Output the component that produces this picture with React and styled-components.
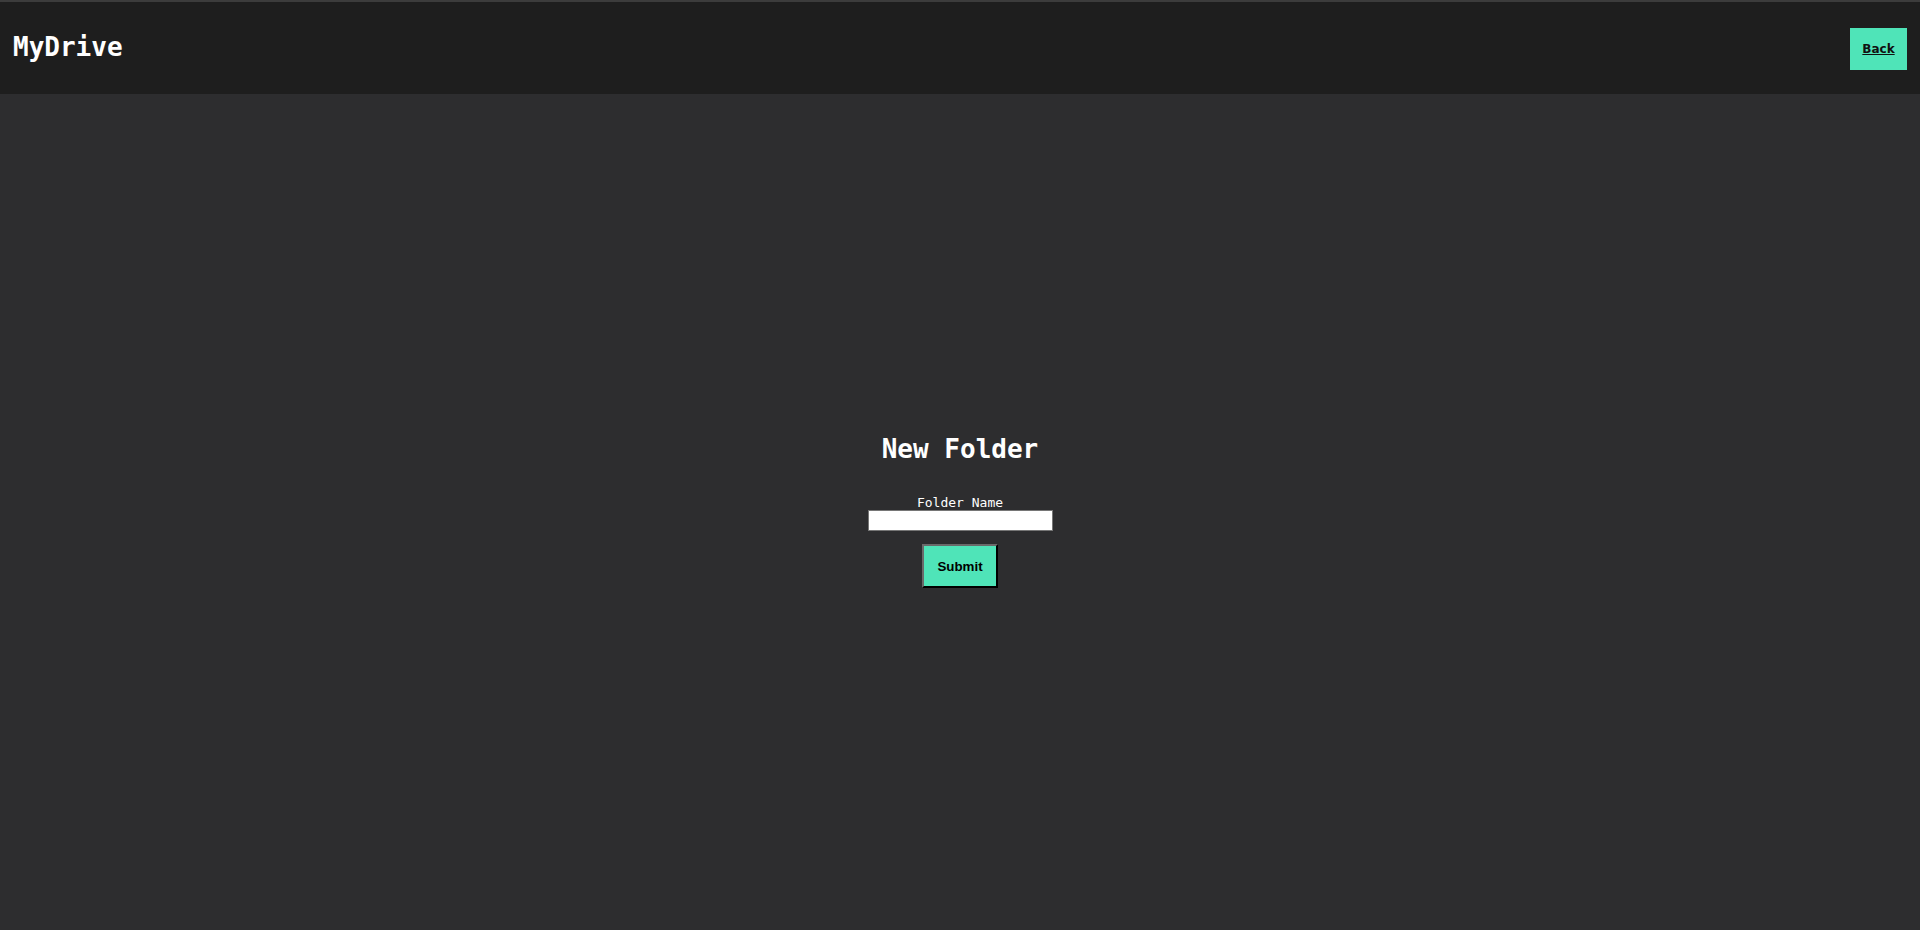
import React from 'react'
import styled, { createGlobalStyle } from 'styled-components'

const Global = createGlobalStyle`
  html, body {
    margin: 0;
    padding: 0;
    background: #2d2d2f;
  }
  #root {
    min-height: 100vh;
  }
`

const Page = styled.div`
  display: flex;
  flex-direction: column;
  height: 100vh;
  background: #2d2d2f;
  font-family: "DejaVu Sans Mono", monospace;
`

const TopBar = styled.header`
  display: flex;
  align-items: center;
  justify-content: space-between;
  height: 92px;
  padding: 0 13px;
  background: #1e1e1e;
  border-top: 2px solid #3c3c3c;
  flex-shrink: 0;
`

const Logo = styled.h1`
  margin: -2px 0 0;
  font-size: 26px;
  font-weight: bold;
  color: #ffffff;
`

const BackButton = styled.a`
  display: flex;
  align-items: center;
  justify-content: center;
  width: 57px;
  height: 42px;
  margin-top: 2px;
  background: #4fe4b8;
  color: #111;
  font-family: "DejaVu Sans", sans-serif;
  font-size: 12px;
  font-weight: bold;
  text-decoration: underline;
  cursor: pointer;
`

const Main = styled.main`
  flex: 1;
  display: flex;
  align-items: center;
  justify-content: center;
`

const Form = styled.form`
  display: flex;
  flex-direction: column;
  align-items: center;
  margin-top: -2px;
`

const Title = styled.h2`
  margin: 0 0 31px;
  font-size: 26px;
  font-weight: bold;
  color: #ffffff;
  line-height: 30px;
`

const Label = styled.label`
  font-size: 13px;
  color: #ffffff;
  line-height: 15px;
`

const Input = styled.input`
  box-sizing: border-box;
  width: 185px;
  height: 21px;
  border: 1px solid #767676;
  background: #ffffff;
  padding: 0 4px;
`

const Submit = styled.button`
  box-sizing: border-box;
  margin-top: 13px;
  width: 76px;
  height: 44px;
  background: #4fe4b8;
  border: 2px outset #6a6a6a;
  border-right-color: #000;
  border-bottom-color: #000;
  font-family: "Liberation Sans", Arial, sans-serif;
  font-size: 13.33px;
  font-weight: bold;
  color: #000;
  cursor: pointer;
`

export default function App() {
  return (
    <Page>
      <Global />
      <TopBar>
        <Logo>MyDrive</Logo>
        <BackButton>Back</BackButton>
      </TopBar>
      <Main>
        <Form onSubmit={e => e.preventDefault()}>
          <Title>New Folder</Title>
          <Label htmlFor="folder">Folder Name</Label>
          <Input id="folder" type="text" />
          <Submit type="submit">Submit</Submit>
        </Form>
      </Main>
    </Page>
  )
}
